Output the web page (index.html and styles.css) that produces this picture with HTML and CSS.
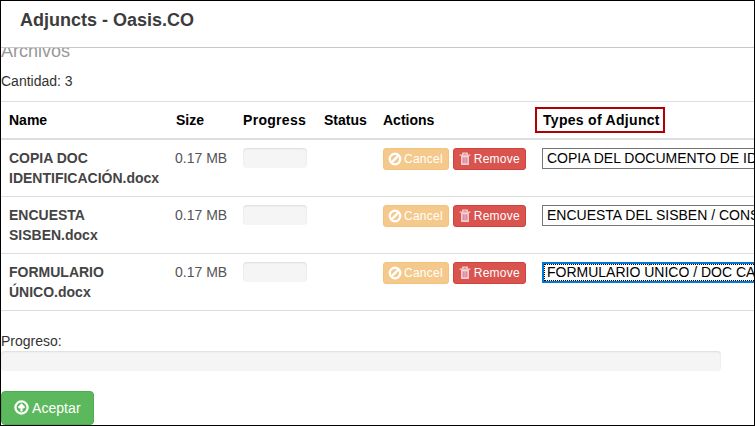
FILE: index.html
```html
<!DOCTYPE html>
<html lang="es">
<head>
    <meta charset="UTF-8">
    <title>Adjuncts - Oasis.CO</title>
    <link rel="stylesheet" href="styles.css">
</head>
<body>
    <div class="dialog">
        <header class="dialog-header">
            <h1>Adjuncts - Oasis.CO</h1>
        </header>
        <div class="dialog-body">
            <h2>Archivos</h2>
            <p class="count">Cantidad: 3</p>
            <table class="files">
                <colgroup>
                    <col class="col-name">
                    <col class="col-size">
                    <col class="col-progress">
                    <col class="col-status">
                    <col class="col-actions">
                    <col class="col-type">
                </colgroup>
                <thead>
                    <tr>
                        <th>Name</th>
                        <th>Size</th>
                        <th class="spaced">Progress</th>
                        <th>Status</th>
                        <th>Actions</th>
                        <th class="spaced"><span class="marked">Types of Adjunct</span></th>
                    </tr>
                </thead>
                <tbody>
                    <tr>
                        <td class="file-name">COPIA DOC IDENTIFICACIÓN.docx</td>
                        <td class="file-size">0.17 MB</td>
                        <td><div class="progress"></div></td>
                        <td></td>
                        <td>
                            <button class="btn btn-cancel"><svg class="icon" viewBox="0 0 16 16"><circle cx="8" cy="8" r="6"/><path d="M3.8 12.2 12.2 3.8"/></svg>Cancel</button>
                            <button class="btn btn-remove"><svg class="icon" viewBox="0 0 16 16"><path class="lid" d="M5.5 3V1.2h5V3M1.8 3.6h12.4"/><path class="can" d="M3.5 4.2v10.6h9V4.2z"/><path class="bars" d="M5.9 6v7M8 6v7M10.1 6v7"/></svg>Remove</button>
                        </td>
                        <td class="type-cell"><div class="picker">COPIA DEL DOCUMENTO DE IDENTIDAD</div></td>
                    </tr>
                    <tr>
                        <td class="file-name">ENCUESTA SISBEN.docx</td>
                        <td class="file-size">0.17 MB</td>
                        <td><div class="progress"></div></td>
                        <td></td>
                        <td>
                            <button class="btn btn-cancel"><svg class="icon" viewBox="0 0 16 16"><circle cx="8" cy="8" r="6"/><path d="M3.8 12.2 12.2 3.8"/></svg>Cancel</button>
                            <button class="btn btn-remove"><svg class="icon" viewBox="0 0 16 16"><path class="lid" d="M5.5 3V1.2h5V3M1.8 3.6h12.4"/><path class="can" d="M3.5 4.2v10.6h9V4.2z"/><path class="bars" d="M5.9 6v7M8 6v7M10.1 6v7"/></svg>Remove</button>
                        </td>
                        <td class="type-cell"><div class="picker">ENCUESTA DEL SISBEN / CONSTANCIA</div></td>
                    </tr>
                    <tr>
                        <td class="file-name">FORMULARIO ÚNICO.docx</td>
                        <td class="file-size">0.17 MB</td>
                        <td><div class="progress"></div></td>
                        <td></td>
                        <td>
                            <button class="btn btn-cancel"><svg class="icon" viewBox="0 0 16 16"><circle cx="8" cy="8" r="6"/><path d="M3.8 12.2 12.2 3.8"/></svg>Cancel</button>
                            <button class="btn btn-remove"><svg class="icon" viewBox="0 0 16 16"><path class="lid" d="M5.5 3V1.2h5V3M1.8 3.6h12.4"/><path class="can" d="M3.5 4.2v10.6h9V4.2z"/><path class="bars" d="M5.9 6v7M8 6v7M10.1 6v7"/></svg>Remove</button>
                        </td>
                        <td class="type-cell"><div class="picker picker-focus"><span>FORMULARIO ÚNICO / DOC CARACTERIZACIÓN</span></div></td>
                    </tr>
                </tbody>
            </table>
            <p class="progress-label">Progreso:</p>
            <div class="progress progress-total"></div>
            <button class="btn btn-accept"><svg class="icon-up" viewBox="0 0 16 16"><circle cx="8" cy="8" r="6.5"/><path d="M8 12.2V5.6M4.9 8.4 8 5.2l3.1 3.2"/></svg>Aceptar</button>
        </div>
    </div>
</body>
</html>
```
FILE: styles.css
```css
* {
    box-sizing: border-box;
}
html, body {
    margin: 0;
    padding: 0;
    height: 100%;
    overflow: hidden;
}
body {
    font-family: "Liberation Sans", Arial, sans-serif;
    font-size: 14px;
    line-height: 20px;
    color: #333;
    background-color: #fff;
}
.dialog {
    width: 755px;
    height: 426px;
    border: 1px solid #000;
    overflow: hidden;
}
.dialog-header {
    position: relative;
    z-index: 1;
    height: 47px;
    padding: 9px 19px;
    background-color: #fff;
    border-bottom: 1px solid #c8c8c8;
}
.dialog-header h1 {
    margin: 0;
    font-size: 18px;
    line-height: 20px;
    font-weight: bold;
    color: #3c3c3c;
}
.dialog-body {
    margin-top: -7px;
}
.dialog-body h2 {
    margin: 0;
    height: 20px;
    font-size: 18px;
    line-height: 20px;
    font-weight: normal;
    color: #999;
}
.count {
    margin: 10px 0 0;
    height: 20px;
}
.files {
    width: 900px;
    margin-top: 10px;
    table-layout: fixed;
    border-collapse: collapse;
}
.col-name { width: 167px; }
.col-size { width: 67px; }
.col-progress { width: 81px; }
.col-status { width: 59px; }
.col-actions { width: 160px; }
.files th {
    padding: 8px;
    text-align: left;
    color: #000;
    border-top: 1px solid #ddd;
    border-bottom: 2px solid #ddd;
    white-space: nowrap;
}
.files th.spaced {
    letter-spacing: .3px;
}
.files td {
    padding: 8px;
    vertical-align: top;
    border-bottom: 1px solid #ddd;
}
.files .file-name {
    font-weight: bold;
    color: #444;
}
.files .file-size {
    padding-left: 7px;
    padding-right: 0;
    white-space: nowrap;
    color: #555;
}
.marked {
    position: relative;
}
.marked::after {
    content: "";
    position: absolute;
    top: -5px;
    bottom: -5px;
    left: -8px;
    right: -5px;
    border: 2px solid #b00000;
}
.progress {
    width: 64px;
    height: 20px;
    background-color: #f5f5f5;
    border-radius: 4px;
    box-shadow: inset 0 1px 2px rgba(0, 0, 0, .1);
}
.btn {
    display: inline-block;
    height: 22px;
    padding: 1px 5px 1px 4px;
    font-family: inherit;
    font-size: 12px;
    line-height: 18px;
    letter-spacing: .25px;
    color: #fff;
    border: 1px solid transparent;
    border-radius: 3px;
    vertical-align: top;
}
.btn-cancel {
    background-color: #f0ad4e;
    border-color: #eea236;
    opacity: .65;
}
.btn-remove {
    background-color: #d9534f;
    border-color: #d43f3a;
}
.icon {
    width: 14px;
    height: 14px;
    margin-right: 2px;
    vertical-align: -3px;
    fill: none;
    stroke: #fff;
    stroke-width: 2.6;
}
.btn-remove .icon {
    stroke: #f6d5d3;
}
.btn-remove .lid {
    stroke-width: 1.5;
}
.btn-remove .can {
    fill: #f6d5d3;
    stroke: none;
}
.btn-remove .bars {
    stroke: #c85a8a;
    stroke-width: 1;
}
.files .type-cell {
    padding-left: 7px;
}
.picker {
    width: 400px;
    height: 21px;
    padding: 0 4px;
    border: 1px solid #767676;
    line-height: 19px;
    color: #000;
    white-space: nowrap;
}
.picker-focus {
    padding: 0;
    border: 2px solid #0078d7;
    line-height: 17px;
}
.picker-focus span {
    display: block;
    height: 17px;
    padding-left: 3px;
    outline: 1px dotted #000;
    outline-offset: -1px;
}
.progress-label {
    margin: 20px 0 0;
    height: 20px;
}
.progress-total {
    width: 720px;
}
.btn-accept {
    display: block;
    width: 93px;
    height: 34px;
    margin-top: 20px;
    padding: 6px 0 6px 12px;
    font-size: 14px;
    line-height: 20px;
    letter-spacing: .05px;
    text-align: left;
    background-color: #5cb85c;
    border-color: #4cae4c;
    border-radius: 4px;
}
.icon-up {
    width: 15px;
    height: 15px;
    margin-right: 3px;
    vertical-align: -2px;
    fill: none;
    stroke: #fff;
    stroke-width: 2.4;
}
```
